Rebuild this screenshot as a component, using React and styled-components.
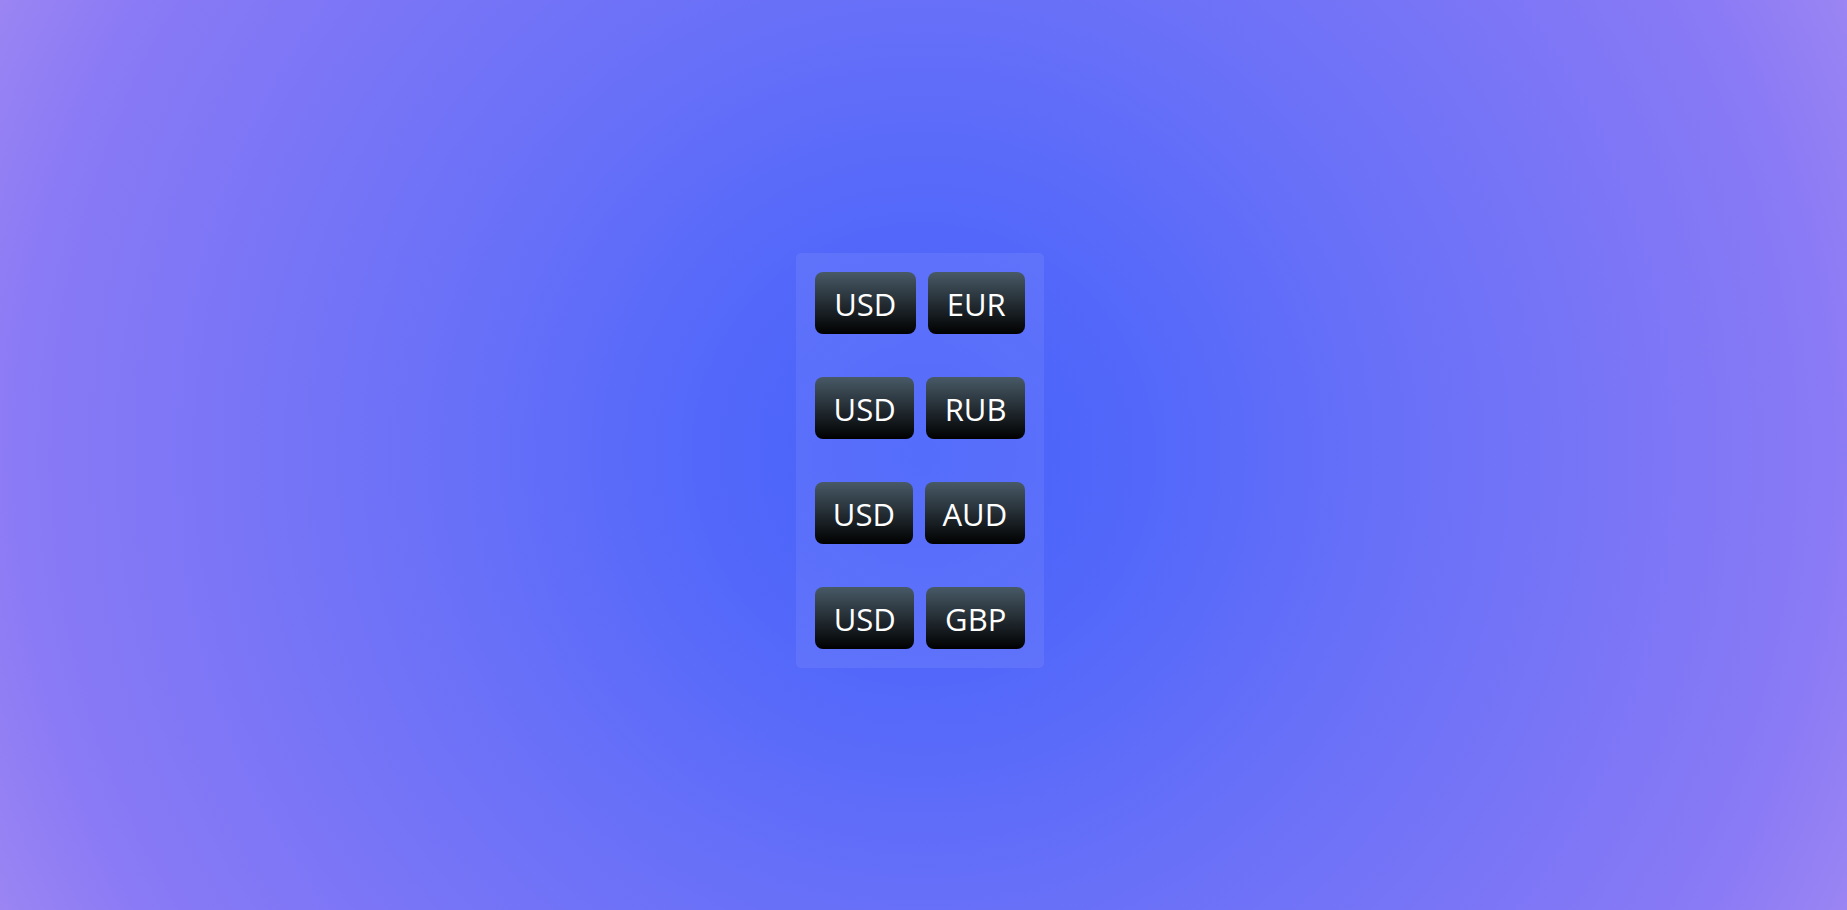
import React from 'react'
import styled, { createGlobalStyle } from 'styled-components';

const GlobalStyle = createGlobalStyle`
  html, body {
    margin: 0;
    padding: 0;
    height: 100%;
  }
  #root {
    height: 100%;
  }
`;

const Page = styled.div`
width: 100%;
height: 100vh;
display: flex;
align-items: center;
justify-content: center;
background: radial-gradient(circle at 50% 50%, #4862fb 0%, #5368fa 22%, #6870f8 45%, #8a7af5 88%, #9b85f3 100%);
font-family: "Open Sans", "Noto Sans", sans-serif;
`;

const Panel = styled.div`
width: 210px;
padding: 19px;
display: flex;
flex-direction: column;
gap: 43px;
background: rgba(255, 255, 255, 0.07);
border-radius: 5px;
margin: 11px 7px 0 0;
`;

const Row = styled.div`
display: flex;
gap: 12px;
`;

const Currency = styled.button`
flex: 1 1 auto;
height: 62px;
padding: 2px 17px 0;
border: none;
border-radius: 8px;
background: linear-gradient(to bottom, #485a67, #000);
color: #fff;
font-family: inherit;
font-size: 31px;
font-weight: 400;
cursor: pointer;
white-space: nowrap;
`;

const pairs = [
    ['USD', 'EUR'],
    ['USD', 'RUB'],
    ['USD', 'AUD'],
    ['USD', 'GBP'],
];

function App() {
    return (
        <>
            <GlobalStyle />
            <Page>
                <Panel>
                    {pairs.map(([from, to], i) => (
                        <Row key={i}>
                            <Currency>{from}</Currency>
                            <Currency>{to}</Currency>
                        </Row>
                    ))}
                </Panel>
            </Page>
        </>
    )
}

export default App
